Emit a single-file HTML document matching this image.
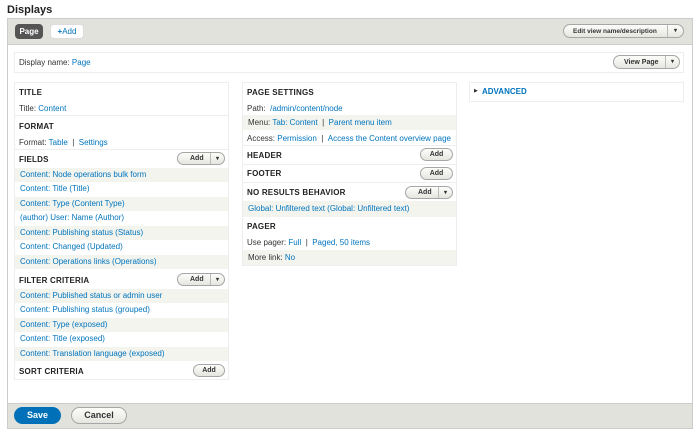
<!DOCTYPE html><html><head><style>
*{margin:0;padding:0;box-sizing:border-box}
body{width:700px;height:435px;background:#fff;font-family:"Liberation Sans",sans-serif;font-size:8px;color:#333;position:relative;overflow:hidden}
.a{position:absolute;white-space:nowrap}
.h{font-weight:bold;color:#222;font-size:8px;letter-spacing:.2px}
.l{color:#0074bd}
.row{position:absolute;height:14px;line-height:14px;padding-left:5px;white-space:nowrap}
.alt{background:#f3f4ee}
.btn{position:absolute;height:13px;border:1px solid #a6a6a6;border-radius:7px;background:linear-gradient(#fcfcfa,#e6e6e0);font-size:7px;font-weight:bold;color:#333;line-height:12px;text-align:left;padding-left:12px;white-space:nowrap}
.btn.s{padding-left:0;text-align:center}
.dd{position:absolute;top:0;right:0;width:14px;height:11px;border-left:1px solid #bbb;font-size:6px;line-height:12px;text-align:center}
.box{position:absolute;border:1px solid #eee;background:#fff}
</style></head><body>
<div class="a" style="left:7px;top:4px;font-size:11px;font-weight:bold;color:#222">Displays</div>
<div class="a" style="left:7px;top:18px;width:686px;height:411px;border:1px solid #ccc;background:#fff"></div>
<div class="a" style="left:7px;top:18px;width:686px;height:27px;background:#e1e2dc;border:1px solid #ccc"></div>
<div class="a" style="left:15px;top:24px;width:28px;height:15px;background:#555;border-radius:4px;color:#fff;font-weight:bold;font-size:8px;line-height:15px;text-align:center">Page</div>
<div class="a" style="left:50px;top:24px;width:34px;height:15px;background:#fff;border:1px solid #ddd;border-radius:4px;color:#0074bd;font-size:8px;line-height:13px;text-align:center"><b>+</b>Add</div>
<div class="btn" style="left:563px;top:24px;width:121px;height:14px;line-height:13px;font-size:6.5px;padding-left:9px">Edit view name/description<span class="dd" style="width:16px;height:12px;line-height:13px">▾</span></div>
<div class="box" style="left:14px;top:52px;width:670px;height:21px"></div>
<div class="a" style="left:19px;top:58px">Display name: <span class="l">Page</span></div>
<div class="btn" style="left:613px;top:55px;width:67px;height:14px;line-height:13px;padding-left:10px">View Page<span class="dd" style="height:12px;line-height:13px">▾</span></div>

<div class="box" style="left:14px;top:82px;width:215px;height:298px"></div>
<div class="a h" style="left:19px;top:88px">TITLE</div>
<div class="a" style="left:19px;top:104px">Title: <span class="l">Content</span></div>
<div class="a" style="left:15px;top:115px;width:213px;border-top:1px solid #eee"></div>
<div class="a h" style="left:19px;top:122px">FORMAT</div>
<div class="a" style="left:19px;top:138px">Format: <span class="l">Table</span> &nbsp;| &nbsp;<span class="l">Settings</span></div>
<div class="a" style="left:15px;top:149px;width:213px;border-top:1px solid #eee"></div>
<div class="a h" style="left:19px;top:155px">FIELDS</div>
<div class="btn" style="left:177px;top:152px;width:48px">Add<span class="dd">▾</span></div>
<div class="row alt l" style="left:15px;top:168px;width:213px">Content: Node operations bulk form</div>
<div class="row l" style="left:15px;top:182px;width:213px">Content: Title (Title)</div>
<div class="row alt l" style="left:15px;top:197px;width:213px">Content: Type (Content Type)</div>
<div class="row l" style="left:15px;top:211px;width:213px">(author) User: Name (Author)</div>
<div class="row alt l" style="left:15px;top:226px;width:213px">Content: Publishing status (Status)</div>
<div class="row l" style="left:15px;top:240px;width:213px">Content: Changed (Updated)</div>
<div class="row alt l" style="left:15px;top:255px;width:213px">Content: Operations links (Operations)</div>
<div class="a h" style="left:19px;top:276px">FILTER CRITERIA</div>
<div class="btn" style="left:177px;top:273px;width:48px">Add<span class="dd">▾</span></div>
<div class="row alt l" style="left:15px;top:289px;width:213px">Content: Published status or admin user</div>
<div class="row l" style="left:15px;top:303px;width:213px">Content: Publishing status (grouped)</div>
<div class="row alt l" style="left:15px;top:318px;width:213px">Content: Type (exposed)</div>
<div class="row l" style="left:15px;top:332px;width:213px">Content: Title (exposed)</div>
<div class="row alt l" style="left:15px;top:347px;width:213px">Content: Translation language (exposed)</div>
<div class="a h" style="left:19px;top:367px">SORT CRITERIA</div>
<div class="btn s" style="left:193px;top:364px;width:32px">Add</div>

<div class="box" style="left:242px;top:82px;width:215px;height:184px"></div>
<div class="a h" style="left:247px;top:88px">PAGE SETTINGS</div>
<div class="a" style="left:247px;top:104px">Path: &nbsp;<span class="l">/admin/content/node</span></div>
<div class="row alt" style="left:243px;top:115px;width:213px;height:15px;line-height:15px">Menu: <span class="l">Tab: Content</span> &nbsp;| &nbsp;<span class="l">Parent menu item</span></div>
<div class="a" style="left:247px;top:134px">Access: <span class="l">Permission</span> &nbsp;| &nbsp;<span class="l">Access the Content overview page</span></div>
<div class="a" style="left:243px;top:145px;width:213px;border-top:1px solid #eee"></div>
<div class="a h" style="left:247px;top:151px">HEADER</div>
<div class="btn s" style="left:420px;top:148px;width:33px">Add</div>
<div class="a" style="left:243px;top:164px;width:213px;border-top:1px solid #eee"></div>
<div class="a h" style="left:247px;top:169px">FOOTER</div>
<div class="btn s" style="left:420px;top:167px;width:33px">Add</div>
<div class="a" style="left:243px;top:182px;width:213px;border-top:1px solid #eee"></div>
<div class="a h" style="left:247px;top:188px">NO RESULTS BEHAVIOR</div>
<div class="btn" style="left:405px;top:186px;width:48px">Add<span class="dd">▾</span></div>
<div class="row alt l" style="left:243px;top:201px;width:213px;height:16px;line-height:16px">Global: Unfiltered text (Global: Unfiltered text)</div>
<div class="a h" style="left:247px;top:222px">PAGER</div>
<div class="a" style="left:247px;top:238px">Use pager: <span class="l">Full</span> &nbsp;| &nbsp;<span class="l">Paged, 50 items</span></div>
<div class="row alt" style="left:243px;top:250px;width:213px;height:15px;line-height:15px">More link: <span class="l">No</span></div>

<div class="box" style="left:469px;top:82px;width:215px;height:20px"></div>
<div class="a" style="left:474px;top:88px;font-size:5px;color:#333">▶</div>
<div class="a l" style="left:482px;top:87px;font-weight:bold;font-size:8px">ADVANCED</div>

<div class="a" style="left:7px;top:403px;width:686px;height:26px;background:#e1e2dc;border:1px solid #ccc"></div>
<div class="a" style="left:14px;top:407px;width:47px;height:17px;background:#0071b8;border-radius:9px;color:#fff;font-weight:bold;font-size:9px;line-height:17px;text-align:center">Save</div>
<div class="a" style="left:71px;top:407px;width:56px;height:17px;background:linear-gradient(#fcfcfa,#e6e6e0);border:1px solid #a6a6a6;border-radius:9px;color:#333;font-weight:bold;font-size:9px;line-height:15px;text-align:center">Cancel</div>
</body></html>
